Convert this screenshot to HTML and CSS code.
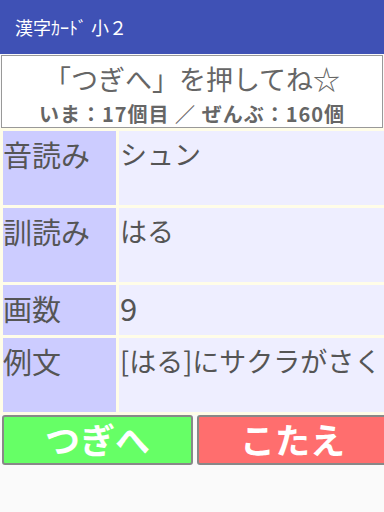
FILE: index.html
```html
<!DOCTYPE html>
<html>
	<head>
		<title>漢字カード 小２</title>
		<meta charset="UTF-8">
		<meta name="viewport" content="width=device-width, initial-scale=1">
		<link rel="stylesheet" href="styles.css">
	</head>
	<body>
		<div id="appbar">
			<span class="title">漢字ｶｰﾄﾞ 小２</span>
		</div>
		<div id="info">
			<div class="message">「つぎへ」を押してね☆</div>
			<div class="count">いま：17個目 ／ ぜんぶ：160個</div>
		</div>
		<div id="card">
			<div class="row tall">
				<div class="label">音読み</div>
				<div class="value">シュン</div>
			</div>
			<div class="row tall">
				<div class="label">訓読み</div>
				<div class="value">はる</div>
			</div>
			<div class="row short">
				<div class="label">画数</div>
				<div class="value number">9</div>
			</div>
			<div class="row tall">
				<div class="label">例文</div>
				<div class="value">[はる]にサクラがさく</div>
			</div>
		</div>
		<div id="buttons">
			<div class="btn next">つぎへ</div>
			<div class="btn answer">こたえ</div>
		</div>
	</body>
</html>
```

FILE: styles.css
```css
body {
	margin: 0;
	width: 384px;
	height: 512px;
	overflow: hidden;
	background: #FAFAFA;
	font-family: "Noto Sans CJK JP", "Noto Sans", sans-serif;
	color: #555;
}
#appbar {
	height: 54px;
	background: #3F51B5;
	display: flex;
	align-items: center;
	padding-left: 15px;
}
#appbar .title {
	color: #FFF;
	font-size: 18px;
}
#info {
	margin: 1px 1px 0 1px;
	height: 71px;
	background: #FFF;
	border: 1px solid #999;
	text-align: center;
	color: #666;
}
.message {
	font-size: 27px;
	line-height: 34px;
	padding-top: 6px;
}
.count {
	font-size: 20px;
	font-weight: bold;
	letter-spacing: 1px;
	line-height: 26px;
	padding-top: 5px;
}
#card {
	background: #FFFDE8;
	padding: 3px 0 3px 3px;
	display: flex;
	flex-direction: column;
	gap: 3px;
}
.row {
	display: flex;
	gap: 3px;
}
.row.tall {
	height: 74px;
}
.row.short {
	height: 50px;
}
.label {
	width: 113px;
	background: #CCCCFF;
	font-size: 29px;
	line-height: 36px;
	padding-top: 5px;
	box-sizing: border-box;
}
.value {
	flex: 1;
	background: #EEEEFF;
	font-size: 27px;
	line-height: 36px;
	padding: 5px 0 0 1px;
	white-space: nowrap;
}
.value.number {
	font-size: 31px;
}
#buttons {
	display: flex;
	gap: 4px;
	padding-left: 2px;
	height: 50px;
}
.btn {
	flex: none;
	width: 191px;
	box-sizing: border-box;
	border: 2px solid #888;
	border-radius: 3px;
	color: #FFF;
	font-size: 35px;
	font-weight: bold;
	text-align: center;
	line-height: 44px;
}
.btn.next {
	background: #66FF66;
}
.btn.answer {
	background: #FF6E6E;
}
```
